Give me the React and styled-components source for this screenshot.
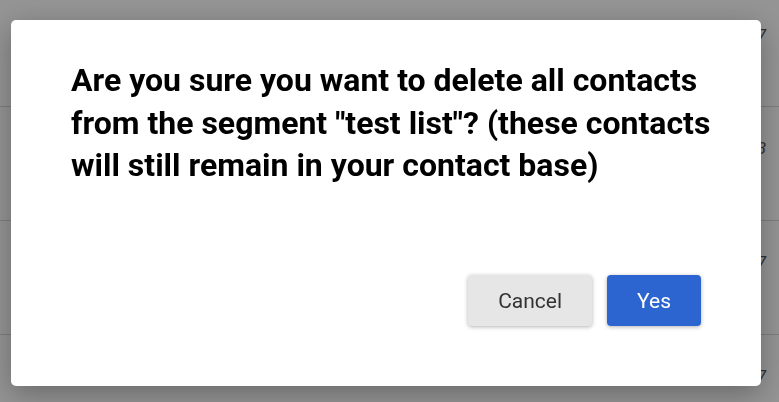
import styled, { createGlobalStyle } from 'styled-components';

const GlobalStyle = createGlobalStyle`
   body {
      margin: 0;
      font-family: Roboto, "Liberation Sans", sans-serif;
      background: #ffffff;
   }
`;

const Page = styled.div`
   width: 100%;
   height: 402px;
   overflow: hidden;
`;

const Row = styled.div`
   height: 114px;
   border-bottom: 1px solid #d8d8d8;
   display: flex;
   justify-content: flex-end;
   align-items: flex-start;
   padding: ${(p) => (p.first ? '0' : '31px')} 13px 0 0;
   box-sizing: border-box;
   margin-top: ${(p) => (p.first ? '-7px' : '0')};
   font-style: italic;
   font-size: 17px;
   color: #555;
`;

const FirstRowText = styled.span`
   margin-top: 32px;
`;

// dark backdrop over the page
const Overlay = styled.div`
   position: fixed;
   inset: 0;
   background: rgba(0, 0, 0, 0.42);
   display: flex;
   align-items: flex-start;
   padding: 20px 0 0 11px;
`;

const Dialog = styled.div`
   width: 750px;
   height: 366px;
   box-sizing: border-box;
   background: #fff;
   border-radius: 5px;
   box-shadow: 0 8px 30px rgba(0, 0, 0, 0.3);
   padding: 39px 60px 60px;
   display: flex;
   flex-direction: column;
   justify-content: space-between;
`;

const Title = styled.h2`
   margin: 0 -36px 0 0;
   font-size: 32px;
   line-height: 42.5px;
   font-weight: 700;
   color: #000;
`;

const Actions = styled.div`
   display: flex;
   justify-content: flex-end;
   gap: 15px;
`;

const Button = styled.button`
   height: 51px;
   padding: 0 30px;
   border: none;
   border-radius: 4px;
   font-family: Roboto, "Liberation Sans", sans-serif;
   font-size: 21px;
   cursor: pointer;
   background: ${(p) => (p.primary ? '#2c65d0' : '#e6e6e6')};
   color: ${(p) => (p.primary ? '#fff' : '#333')};
   box-shadow: 0 1px 4px rgba(0, 0, 0, 0.3);
`;

const dates = ['12/10/2017', '03/11/2018', '21/09/2017', '11/05/2017'];

const App = () => {
   return (
      <>
         <GlobalStyle />
         <Page>
            {dates.map((d, i) =>
               i === 0 ? (
                  <Row key={d} first>
                     <FirstRowText>{d}</FirstRowText>
                  </Row>
               ) : (
                  <Row key={d}>{d}</Row>
               )
            )}
         </Page>
         <Overlay>
            <Dialog>
               <Title>
                  Are you sure you want to delete all contacts from the segment "test list"? (these
                  contacts will still remain in your contact base)
               </Title>
               <Actions>
                  <Button>Cancel</Button>
                  <Button primary>Yes</Button>
               </Actions>
            </Dialog>
         </Overlay>
      </>
   );
};

export default App;
